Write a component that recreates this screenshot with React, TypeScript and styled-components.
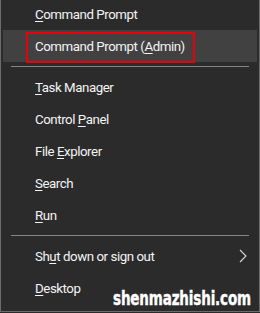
import React from "react";
import styled, { createGlobalStyle } from "styled-components";

const Global = createGlobalStyle`
  html, body { margin: 0; padding: 0; background: #2b2b2b; overflow: hidden; }
  #root { width: 260px; height: 313px; overflow: hidden; }
`;

const Menu = styled.div`
  position: relative;
  box-sizing: border-box;
  width: 260px;
  height: 314px;
  margin-top: -2px;
  background: #2b2b2b;
  border: 1px solid #6b6b6b;
  border-top: none;
  padding: 0 2px 7px 2px;
  display: flex;
  flex-direction: column;
  font-family: Roboto, "Liberation Sans", sans-serif;
  font-size: 13.3px;
  letter-spacing: -0.45px;
  color: #f4f4f4;
`;

const Item = styled.div<{ $active?: boolean }>`
  position: relative;
  height: 32px;
  flex: none;
  display: flex;
  align-items: center;
  padding-left: 32px;
  padding-right: 10px;
  background: ${(p) => (p.$active ? "#414141" : "transparent")};
`;

const Label = styled.span`
  flex: 1;
  white-space: nowrap;
`;

const Key = styled.span`
  text-decoration: underline;
  text-decoration-thickness: 1px;
  text-underline-offset: 2px;
`;

const Separator = styled.div`
  flex: none;
  height: 1px;
  margin: 4px 8px;
  background: #858585;
`;

const Highlight = styled.div`
  position: absolute;
  left: 23px;
  top: 2px;
  width: 169px;
  height: 31px;
  border: 2px solid #e8000b;
  box-sizing: border-box;
  pointer-events: none;
`;

const Chevron = styled.svg`
  flex: none;
  width: 8px;
  height: 14px;
`;

const Watermark = styled.div`
  position: absolute;
  left: 112px;
  top: 291px;
  font-family: "DejaVu Sans Condensed", "DejaVu Sans", sans-serif;
  font-weight: bold;
  font-size: 19px;
  line-height: 19px;
  letter-spacing: -0.2px;
  color: #ffffff;
  -webkit-text-stroke: 0.4px #ffffff;
  transform: scaleX(0.79);
  transform-origin: left top;
  white-space: nowrap;
`;

export default function App() {
  return (
    <>
      <Global />
      <Menu>
        <Item>
          <Label>
            <Key>C</Key>ommand Prompt
          </Label>
        </Item>
        <Item $active>
          <Label>
            Command Prompt (<Key>A</Key>dmin)
          </Label>
          <Highlight />
        </Item>
        <Separator />
        <Item>
          <Label>
            <Key>T</Key>ask Manager
          </Label>
        </Item>
        <Item>
          <Label>
            Control <Key>P</Key>anel
          </Label>
        </Item>
        <Item>
          <Label>
            File <Key>E</Key>xplorer
          </Label>
        </Item>
        <Item>
          <Label>
            <Key>S</Key>earch
          </Label>
        </Item>
        <Item>
          <Label>
            <Key>R</Key>un
          </Label>
        </Item>
        <Separator />
        <Item>
          <Label>
            Sh<Key>u</Key>t down or sign out
          </Label>
          <Chevron viewBox="0 0 8 14">
            <path d="M1 1 L7 7 L1 13" fill="none" stroke="#d8d8d8" strokeWidth="1.1" />
          </Chevron>
        </Item>
        <Item>
          <Label>
            <Key>D</Key>esktop
          </Label>
        </Item>
        <Watermark>shenmazhishi.com</Watermark>
      </Menu>
    </>
  );
}
